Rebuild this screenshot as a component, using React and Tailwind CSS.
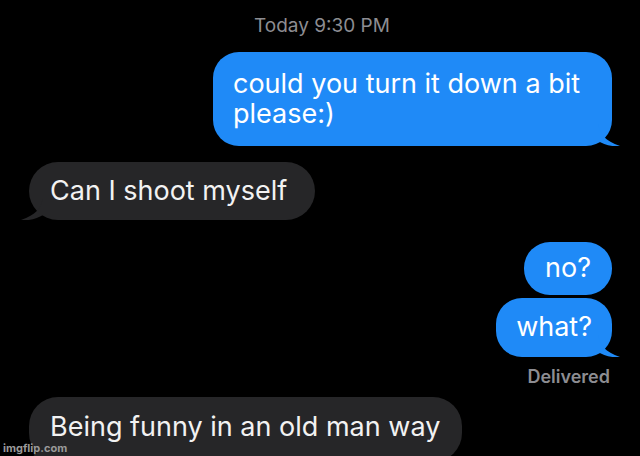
import React from 'react';

const font = { fontFamily: 'Inter, "Liberation Sans", sans-serif' };

// little curl under the bubble corner
const Tail = ({ side, color }) =>
  side === 'right' ? (
    <svg className="absolute -right-[8px] bottom-0" width="22" height="22" viewBox="0 0 22 22">
      <path d="M0 0 C2 10 7 17 22 22 C12 23 5 20 0 17 Z" fill={color} />
    </svg>
  ) : (
    <svg className="absolute -left-[8px] bottom-0" width="22" height="22" viewBox="0 0 22 22">
      <path d="M22 0 C20 10 15 17 0 22 C10 23 17 20 22 17 Z" fill={color} />
    </svg>
  );

const Sent = ({ children, tail, className = '' }) => (
  <div className={`relative self-end rounded-[26px] bg-[#1f8af7] text-white ${className}`}>
    <p className="text-[27px] leading-[30px]">{children}</p>
    {tail && <Tail side="right" color="#1f8af7" />}
  </div>
);

const Received = ({ children, className = '' }) => (
  <div className={`relative self-start rounded-[29px] bg-[#262628] pl-[21px] text-[#f2f2f2] ${className}`}>
    <p className="text-[27px] leading-[30px]">{children}</p>
    <Tail side="left" color="#262628" />
  </div>
);

export default function App() {
  return (
    <div className="relative h-[456px] w-[640px] overflow-hidden bg-black" style={font}>
      <div className="flex flex-col pl-[29px] pr-[28px]">
        <div className="mt-[16px] pl-[225px] text-[19px] leading-[20px] text-[#8d8d92]">Today 9:30 PM</div>

        <Sent tail className="mt-[16px] w-[399px] pl-[20px] pt-[17px] pb-[17px]">
          could you turn it down a bit
          <br />
          please:)
        </Sent>

        <Received className="mt-[16px] pr-[28px] py-[14px]">Can I shoot myself</Received>

        <Sent className="mt-[22px] px-[21px] pt-[11px] pb-[12px]">no?</Sent>
        <Sent tail className="mt-[3px] px-[20px] pt-[14px] pb-[15px]">what?</Sent>

        <div className="mt-[10px] self-end pr-[2px] text-[18px] font-semibold leading-[20px] text-[#8d8d92]">
          Delivered
        </div>

        <Received className="mt-[10px] pr-[22px] pt-[15px] pb-[20px]">Being funny in an old man way</Received>
      </div>

      <div className="absolute bottom-[2px] left-[3px] text-[11px] font-bold leading-[12px] text-[#9a9a9a]">
        imgflip.com
      </div>
    </div>
  );
}
